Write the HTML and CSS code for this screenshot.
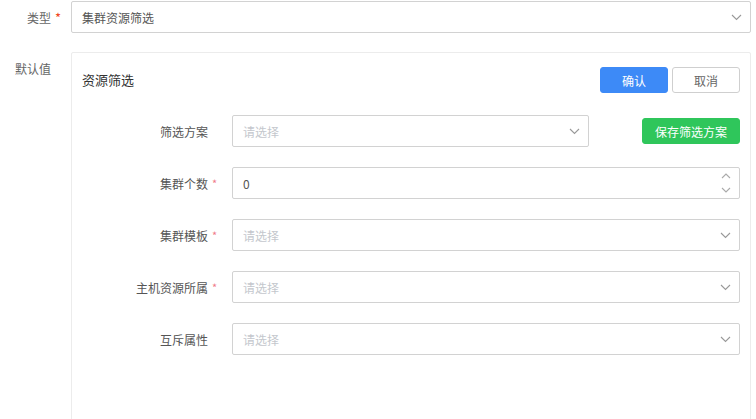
FILE: index.html
```html
<!DOCTYPE html>
<html lang="zh">
<head>
<meta charset="utf-8">
<link rel="stylesheet" href="styles.css">
</head>
<body>
<div class="page">
  <div class="row top-row">
    <div class="top-label"><span class="tl-text">类型</span><span class="tl-star">*</span></div>
    <div class="select top-select">
      <span class="value">集群资源筛选</span>
      <svg class="chev" width="11" height="7" viewBox="0 0 11 7"><path d="M1 1 L5.5 5.5 L10 1" fill="none" stroke="#999" stroke-width="1.1"/></svg>
    </div>
  </div>
  <div class="row default-row">
    <div class="top-label default-label"><span class="tl-text">默认值</span><span class="tl-star"></span></div>
    <div class="panel">
      <div class="panel-head">
        <span class="panel-title">资源筛选</span>
        <div class="actions">
          <button class="btn btn-primary">确认</button>
          <button class="btn btn-default">取消</button>
        </div>
      </div>
      <div class="form">
        <div class="frow">
          <div class="flabel"><span class="ftext">筛选方案</span><span class="fstar"></span></div>
          <div class="fcontrol split">
            <div class="select short">
              <span class="ph">请选择</span>
              <svg class="chev" width="11" height="7" viewBox="0 0 11 7"><path d="M1 1 L5.5 5.5 L10 1" fill="none" stroke="#999" stroke-width="1.1"/></svg>
            </div>
            <button class="btn btn-success">保存筛选方案</button>
          </div>
        </div>
        <div class="frow">
          <div class="flabel"><span class="ftext">集群个数</span><span class="fstar">*</span></div>
          <div class="fcontrol">
            <div class="select number">
              <span class="value">0</span>
              <div class="spin">
                <svg width="10" height="6" viewBox="0 0 10 6"><path d="M1 5 L5 1 L9 5" fill="none" stroke="#aaa" stroke-width="1.1"/></svg>
                <svg width="10" height="6" viewBox="0 0 10 6"><path d="M1 1 L5 5 L9 1" fill="none" stroke="#aaa" stroke-width="1.1"/></svg>
              </div>
            </div>
          </div>
        </div>
        <div class="frow">
          <div class="flabel"><span class="ftext">集群模板</span><span class="fstar">*</span></div>
          <div class="fcontrol">
            <div class="select">
              <span class="ph">请选择</span>
              <svg class="chev" width="11" height="7" viewBox="0 0 11 7"><path d="M1 1 L5.5 5.5 L10 1" fill="none" stroke="#999" stroke-width="1.1"/></svg>
            </div>
          </div>
        </div>
        <div class="frow">
          <div class="flabel"><span class="ftext">主机资源所属</span><span class="fstar">*</span></div>
          <div class="fcontrol">
            <div class="select">
              <span class="ph">请选择</span>
              <svg class="chev" width="11" height="7" viewBox="0 0 11 7"><path d="M1 1 L5.5 5.5 L10 1" fill="none" stroke="#999" stroke-width="1.1"/></svg>
            </div>
          </div>
        </div>
        <div class="frow">
          <div class="flabel"><span class="ftext">互斥属性</span><span class="fstar"></span></div>
          <div class="fcontrol">
            <div class="select">
              <span class="ph">请选择</span>
              <svg class="chev" width="11" height="7" viewBox="0 0 11 7"><path d="M1 1 L5.5 5.5 L10 1" fill="none" stroke="#999" stroke-width="1.1"/></svg>
            </div>
          </div>
        </div>
      </div>
    </div>
  </div>
</div>
</body>
</html>
```

FILE: styles.css
```css
* { box-sizing: border-box; }
html, body {
  margin: 0;
  padding: 0;
  background: #fff;
  font-family: "Noto Sans CJK SC", "Noto Sans", sans-serif;
  font-size: 12px;
  color: #666;
  overflow: hidden;
}
.page {
  width: 756px;
  height: 419px;
  padding-top: 1px;
}
.row {
  display: flex;
  align-items: flex-start;
}
.top-row {
  height: 32px;
  align-items: center;
}
.top-label {
  width: 71px;
  display: flex;
  align-items: center;
  flex-shrink: 0;
}
.tl-text {
  width: 51px;
  text-align: right;
  color: #666;
}
.tl-star {
  width: 20px;
  padding-left: 4px;
  color: #f0461e;
  font-size: 13px;
}
.select {
  position: relative;
  display: flex;
  align-items: center;
  height: 32px;
  border: 1px solid #d2d2d2;
  border-radius: 2px;
  padding-left: 10px;
  background: #fff;
  flex: 1;
}
.top-select {
  width: 680px;
  flex: none;
}
.value {
  color: #555;
}
.ph {
  color: #c4c7cd;
}
.chev {
  position: absolute;
  right: 8px;
  top: 12px;
}
.default-row {
  margin-top: 19px;
}
.default-label {
  padding-top: 8px;
}
.panel {
  width: 680px;
  height: 380px;
  border: 1px solid #ececec;
  border-radius: 2px;
  padding: 14px 10px 0 10px;
  flex: none;
}
.panel-head {
  display: flex;
  justify-content: space-between;
  align-items: center;
  height: 26px;
}
.panel-title {
  font-size: 13px;
  color: #333;
  margin-top: -2px;
}
.actions {
  display: flex;
  gap: 4px;
}
.btn {
  font-family: inherit;
  font-size: 12px;
  height: 26px;
  border-radius: 3px;
  padding: 0;
  cursor: pointer;
}
.btn-primary {
  width: 68px;
  background: #3d8af7;
  border: 1px solid #3d8af7;
  color: #fff;
}
.btn-default {
  width: 68px;
  background: #fff;
  border: 1px solid #cfcfcf;
  color: #666;
}
.btn-success {
  width: 98px;
  background: #2fc65b;
  border: 1px solid #2fc65b;
  color: #fff;
}
.form {
  margin-top: 22px;
}
.frow {
  display: flex;
  align-items: center;
  height: 32px;
  margin-bottom: 20px;
}
.flabel {
  width: 150px;
  display: flex;
  align-items: center;
  flex-shrink: 0;
}
.ftext {
  width: 126px;
  text-align: right;
  color: #555;
}
.fstar {
  width: 24px;
  padding-left: 4px;
  color: #f07a8a;
  font-size: 11px;
}
.fcontrol {
  flex: 1;
  display: flex;
  align-items: center;
}
.fcontrol.split {
  justify-content: space-between;
}
.select.short {
  flex: none;
  width: 357px;
}
.spin {
  position: absolute;
  right: 8px;
  top: 5px;
  display: flex;
  flex-direction: column;
  gap: 8px;
}
.spin svg {
  display: block;
}
```
